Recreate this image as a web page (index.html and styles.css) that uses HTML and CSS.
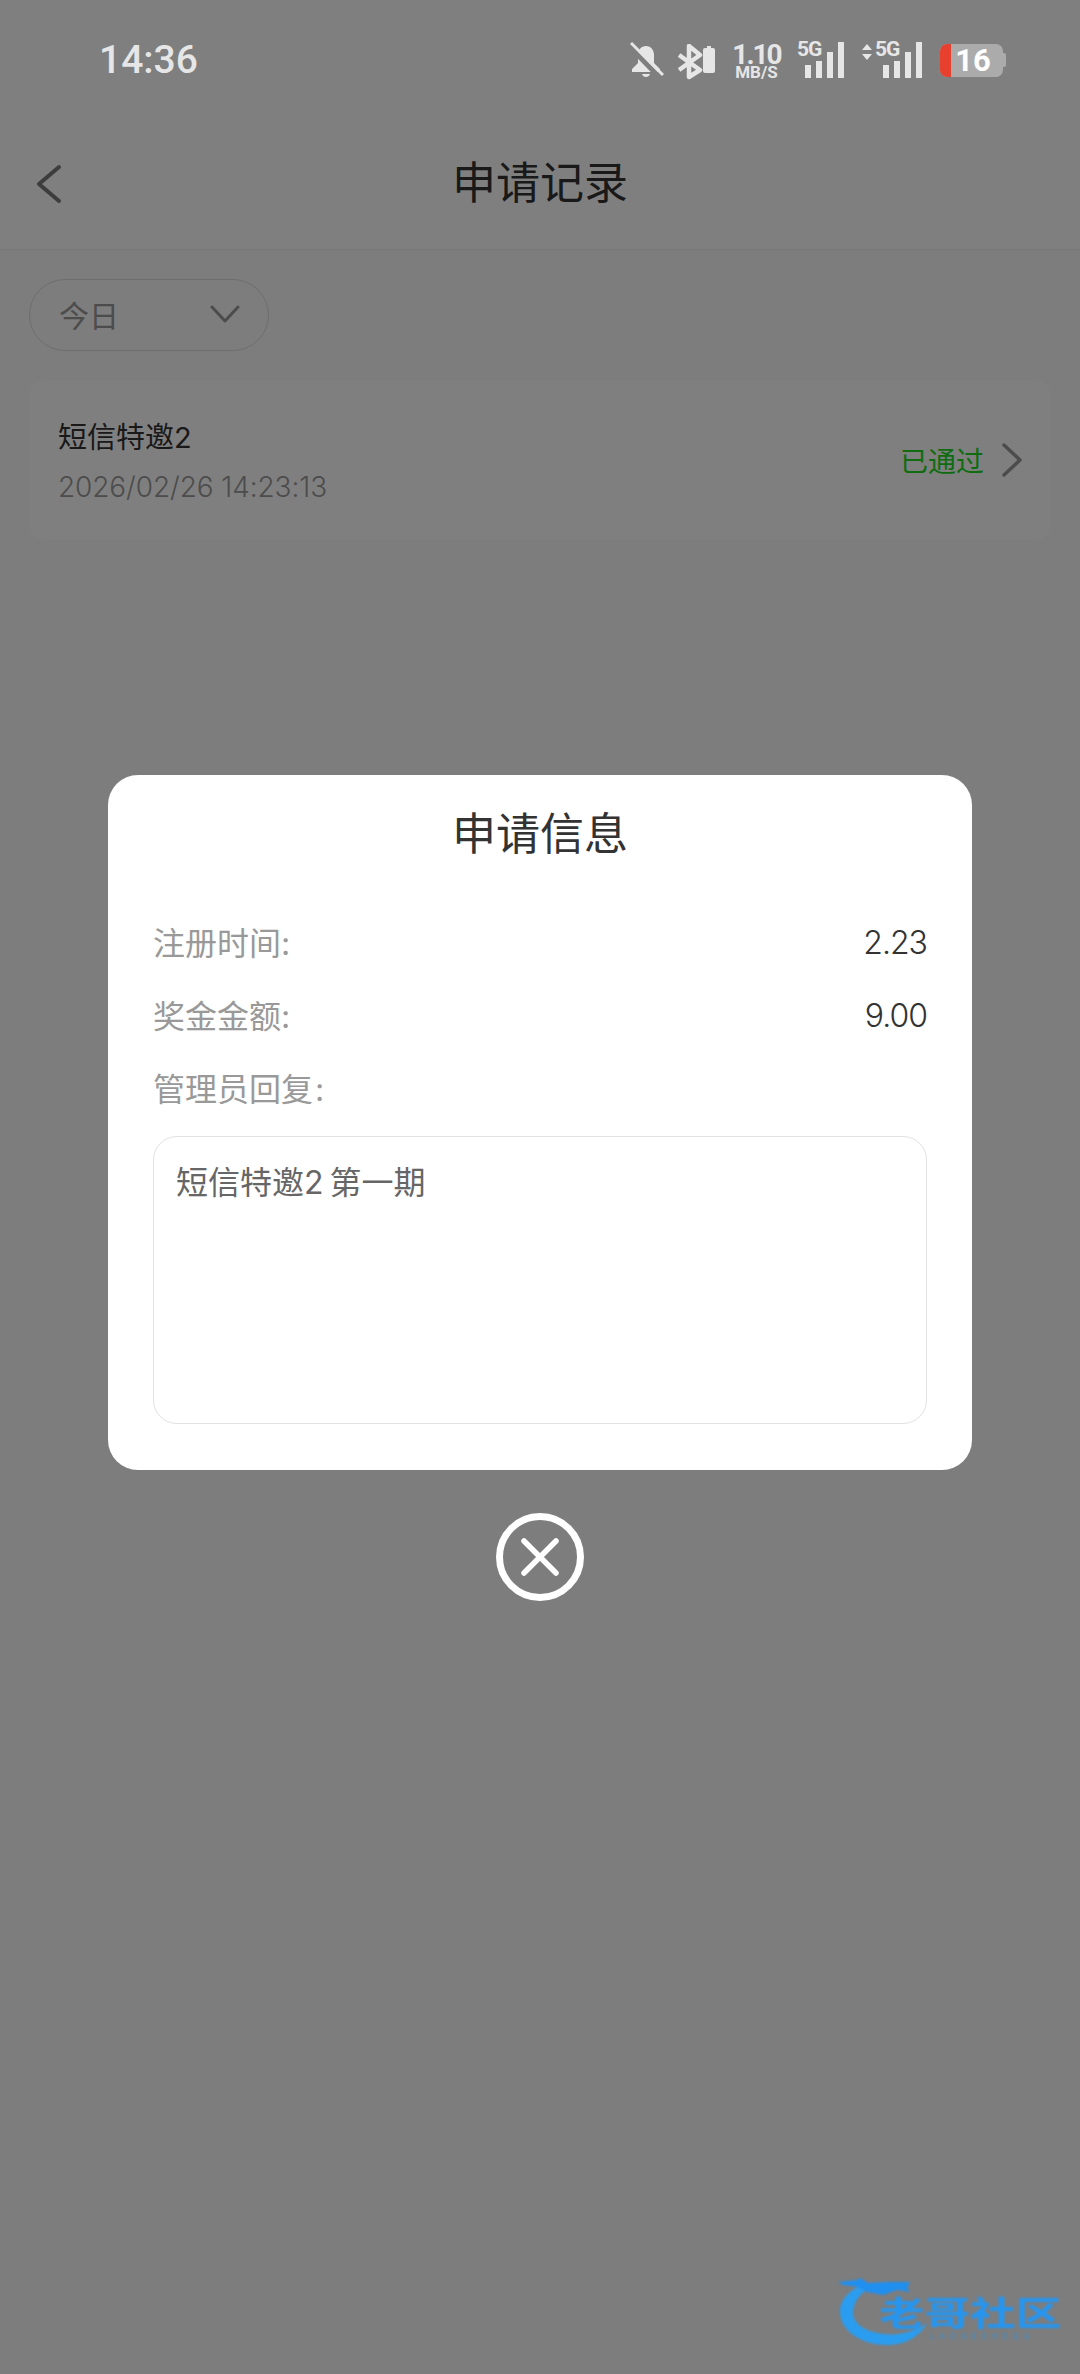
FILE: index.html
```html
<!DOCTYPE html>
<html lang="zh-CN">
<head>
    <meta charset="UTF-8">
    <meta name="viewport" content="width=device-width, initial-scale=1.0">
    <title>申请记录</title>
    <link rel="stylesheet" href="styles.css">
</head>
<body>
<div class="page">
    <div class="status-bar">
        <span class="time">14:36</span>
        <div class="status-icons">
            <svg class="icon-bell" width="34" height="36" viewBox="0 0 34 36">
                <path d="M16 4c-5 0-8 4-8 9v8l-6 6v3h28v-3l-6-6v-8c0-5-3-9-8-9z" fill="#e6e6e6"/>
                <path d="M12 32h8c-.6 2-2 3-4 3s-3.400-1-4-3z" fill="#e6e6e6"/>
                <path d="M-1 4l32 33" stroke="#7f7f7f" stroke-width="5"/>
                <path d="M1 1l32 32" stroke="#e6e6e6" stroke-width="3"/>
            </svg>
            <svg class="icon-bt" width="38" height="36" viewBox="0 0 38 36">
                <path d="M1 11l21 15-11 7V2l11 9L1 26" fill="none" stroke="#e6e6e6" stroke-width="4.500" stroke-linejoin="round"/>
                <path d="M25 6q0-2 2-2h2V2h4v2h2q2 0 2 2v21q0 2-2 2h-8q-2 0-2-2z" fill="#e6e6e6"/>
            </svg>
            <div class="speed">
                <span class="speed-num">1.10</span>
                <span class="speed-unit">MB/S</span>
            </div>
            <div class="signal">
                <span class="net">5G</span>
                <div class="bars">
                    <i class="bar-1"></i><i class="bar-2"></i><i class="bar-3"></i><i class="bar-4"></i>
                </div>
            </div>
            <div class="signal signal-second">
                <svg class="arrows" width="10" height="16" viewBox="0 0 10 16">
                    <path d="M5 0l5 6H0zM5 16l5-6H0z" fill="#e6e6e6"/>
                </svg>
                <span class="net">5G</span>
                <div class="bars">
                    <i class="bar-1"></i><i class="bar-2"></i><i class="bar-3"></i><i class="bar-4"></i>
                </div>
            </div>
            <div class="battery">
                <div class="battery-level"></div>
                <span class="battery-num">16</span>
            </div>
            <div class="battery-nub"></div>
        </div>
    </div>

    <div class="nav">
        <svg class="nav-back" width="26" height="40" viewBox="0 0 26 40">
            <path d="M23 3L3 20l20 17" fill="none" stroke="#7a7a7a" stroke-width="4" stroke-linecap="round" stroke-linejoin="round"/>
        </svg>
        <h1>申请记录</h1>
    </div>

    <div class="content">
        <div class="filter">
            <span>今日</span>
            <svg width="30" height="20" viewBox="0 0 30 20">
                <path d="M2 3l13 14L28 3" fill="none" stroke="#999" stroke-width="3" stroke-linecap="round" stroke-linejoin="round"/>
            </svg>
        </div>

        <div class="record">
            <div class="record-info">
                <div class="record-name">短信特邀2</div>
                <div class="record-date">2026/02/26 14:23:13</div>
            </div>
            <div class="record-status">
                <span>已通过</span>
                <svg width="22" height="36" viewBox="0 0 22 36">
                    <path d="M3 3l16 15L3 33" fill="none" stroke="#999" stroke-width="3.500" stroke-linecap="round" stroke-linejoin="round"/>
                </svg>
            </div>
        </div>
    </div>

    <div class="overlay">
        <div class="modal">
            <h2>申请信息</h2>
            <div class="info-row">
                <span class="info-label">注册时间:</span>
                <span class="info-value">2.23</span>
            </div>
            <div class="info-row">
                <span class="info-label">奖金金额:</span>
                <span class="info-value">9.00</span>
            </div>
            <div class="info-row">
                <span class="info-label admin-label">管理员回复 :</span>
            </div>
            <div class="reply">短信特邀2 第一期</div>
        </div>
        <svg class="close" width="88" height="88" viewBox="0 0 88 88">
            <circle cx="44" cy="44" r="40.500" fill="none" stroke="#fff" stroke-width="7"/>
            <path d="M28 28l32 32M60 28L28 60" stroke="#fff" stroke-width="5.500" stroke-linecap="round"/>
        </svg>
    </div>

    <div class="watermark">
        <svg class="wm-dragon" width="96" height="76" viewBox="0 0 96 76">
            <path d="M25 9C10 14 1 26 2 37c1 19 23 32 47 32 19 0 33-9 40-22-11 8-27 13-43 11C28 56 15 48 15 37c0-11 7-21 21-27z" fill="#2a9df0"/>
            <path d="M0 6l19-2 3-2 8 5 19-1h23l-3 6 3 4-13-2-14 5-16-3-9-5-15-2z" fill="#1f8ff0"/>
        </svg>
        <span class="wm-name">老哥社区</span>
        <span class="wm-sub">LAOGESHEQU</span>
    </div>
</div>
</body>
</html>
```

FILE: styles.css
```css
* {
    box-sizing: border-box;
}
html, body {
    margin: 0;
    padding: 0;
}
body {
    font-family: "Inter", "Noto Sans CJK SC", sans-serif;
    background: #fff;
}
.page {
    position: relative;
    width: 1080px;
    height: 2374px;
    overflow: hidden;
    background: #fafafa;
}

/* status bar sits above the dim layer, so it gets the dimmed colour itself */
.status-bar {
    position: relative;
    z-index: 3;
    height: 120px;
    padding: 42px 74px 0 99px;
    display: flex;
    justify-content: space-between;
    align-items: flex-start;
    background: #7f7f7f;
    color: #e6e6e6;
}
.time {
    margin-top: 1px;
    font-family: "Roboto", sans-serif;
    font-size: 39px;
    font-weight: 500;
    line-height: 34px;
}
.status-icons {
    display: flex;
    align-items: flex-start;
}
.icon-bell {
    margin-right: 14px;
}
.icon-bt {
    margin: 2px 17px 0 0;
}
.speed {
    width: 47px;
    margin: 1px 17px 0 0;
    display: flex;
    flex-direction: column;
    align-items: center;
    font-family: "Roboto", sans-serif;
    font-weight: 700;
}
.speed-num {
    font-size: 28px;
    letter-spacing: -2px;
    line-height: 23px;
}
.speed-unit {
    font-size: 17px;
    line-height: 13px;
}
.signal {
    position: relative;
    width: 47px;
    height: 36px;
    margin-right: 31px;
}
.signal-second {
    margin-right: 18px;
}
.net {
    position: absolute;
    left: 0;
    top: -3px;
    font-family: "Roboto", sans-serif;
    font-size: 21px;
    font-weight: 700;
    letter-spacing: -1px;
    line-height: 20px;
}
.arrows {
    position: absolute;
    left: -13px;
    top: 2px;
}
.bars {
    position: absolute;
    right: 0;
    top: 0;
    height: 36px;
    display: flex;
    align-items: flex-end;
    gap: 5px;
}
.bars i {
    display: block;
    width: 6px;
    background: #e6e6e6;
}
.bar-1 { height: 13px; }
.bar-2 { height: 17px; }
.bar-3 { height: 26px; }
.bar-4 { height: 36px; }
.battery {
    position: relative;
    width: 63px;
    height: 33px;
    margin-top: 2px;
    border-radius: 7px;
    background: #ababab;
    display: flex;
    align-items: center;
    justify-content: center;
}
.battery-level {
    position: absolute;
    left: 0;
    top: 0;
    bottom: 0;
    width: 11px;
    border-radius: 7px 0 0 7px;
    background: #e8402e;
}
.battery-num {
    padding-left: 3px;
    font-family: "Roboto", sans-serif;
    font-size: 31px;
    font-weight: 700;
    line-height: 33px;
    color: #fff;
}
.battery-nub {
    width: 3px;
    height: 14px;
    margin-top: 11px;
    border-radius: 0 2px 2px 0;
    background: #ababab;
}

.nav {
    position: relative;
    height: 130px;
    display: flex;
    align-items: center;
    justify-content: center;
    background: #fff;
    border-bottom: 1px solid #f0f0f0;
}
.nav h1 {
    margin: 0 0 10px;
    font-size: 44px;
    font-weight: 400;
    color: #333;
}
.nav-back {
    position: absolute;
    left: 36px;
    top: 44px;
}

.content {
    padding: 29px 29px 0;
}
.filter {
    width: 240px;
    height: 72px;
    padding: 0 28px 2px 29px;
    display: flex;
    align-items: center;
    justify-content: space-between;
    border: 1px solid #dcdcdc;
    border-radius: 36px;
    font-size: 30px;
    color: #999;
}
.record {
    height: 160px;
    margin-top: 29px;
    padding: 0 28px 0 29px;
    display: flex;
    align-items: center;
    justify-content: space-between;
    background: #fff;
    border-radius: 16px;
}
.record-info {
    padding-top: 5px;
}
.record-name {
    font-size: 29px;
    line-height: 44px;
    color: #333;
}
.record-date {
    margin-top: 5px;
    font-size: 28px;
    font-weight: 300;
    letter-spacing: -0.1px;
    line-height: 44px;
    color: #999;
}
.record-status {
    display: flex;
    align-items: center;
    gap: 17px;
    font-size: 28px;
    color: #22d822;
}

.overlay {
    position: absolute;
    z-index: 2;
    left: 0;
    top: 0;
    width: 100%;
    height: 100%;
    padding-top: 775px;
    display: flex;
    flex-direction: column;
    align-items: center;
    background: rgba(0, 0, 0, 0.5);
}
.modal {
    width: 864px;
    height: 695px;
    padding: 27px 45px 0;
    background: #fff;
    border-radius: 30px;
}
.modal h2 {
    margin: 0 0 38px;
    height: 64px;
    font-size: 44px;
    font-weight: 400;
    line-height: 64px;
    text-align: center;
    color: #333;
}
.info-row {
    height: 73px;
    display: flex;
    align-items: center;
    justify-content: space-between;
    font-size: 32px;
}
.info-label {
    color: #999;
}
.admin-label {
    word-spacing: -7px;
}
.info-value {
    position: relative;
    top: 2px;
    font-weight: 300;
    letter-spacing: -1px;
    color: #333;
}
.reply {
    height: 288px;
    margin-top: 13px;
    padding: 24px 22px;
    border: 1px solid #e2e2e2;
    border-radius: 24px;
    font-size: 32px;
    line-height: 44px;
    word-spacing: -3px;
    color: #666;
}
.close {
    margin-top: 43px;
}

.watermark {
    position: absolute;
    z-index: 3;
    left: 838px;
    top: 2276px;
    width: 230px;
    height: 76px;
    filter: blur(0.8px);
}
.wm-dragon {
    position: absolute;
    left: 0;
    top: 0;
}
.wm-name {
    position: absolute;
    left: 41px;
    top: 16px;
    font-size: 34px;
    font-weight: 700;
    line-height: 44px;
    white-space: nowrap;
    transform: scaleX(1.34);
    transform-origin: left center;
    color: #2496f2;
}
.wm-sub {
    position: absolute;
    left: 92px;
    top: 55px;
    font-size: 8px;
    letter-spacing: 5px;
    line-height: 10px;
    white-space: nowrap;
    color: #3a8fd0;
}
```
